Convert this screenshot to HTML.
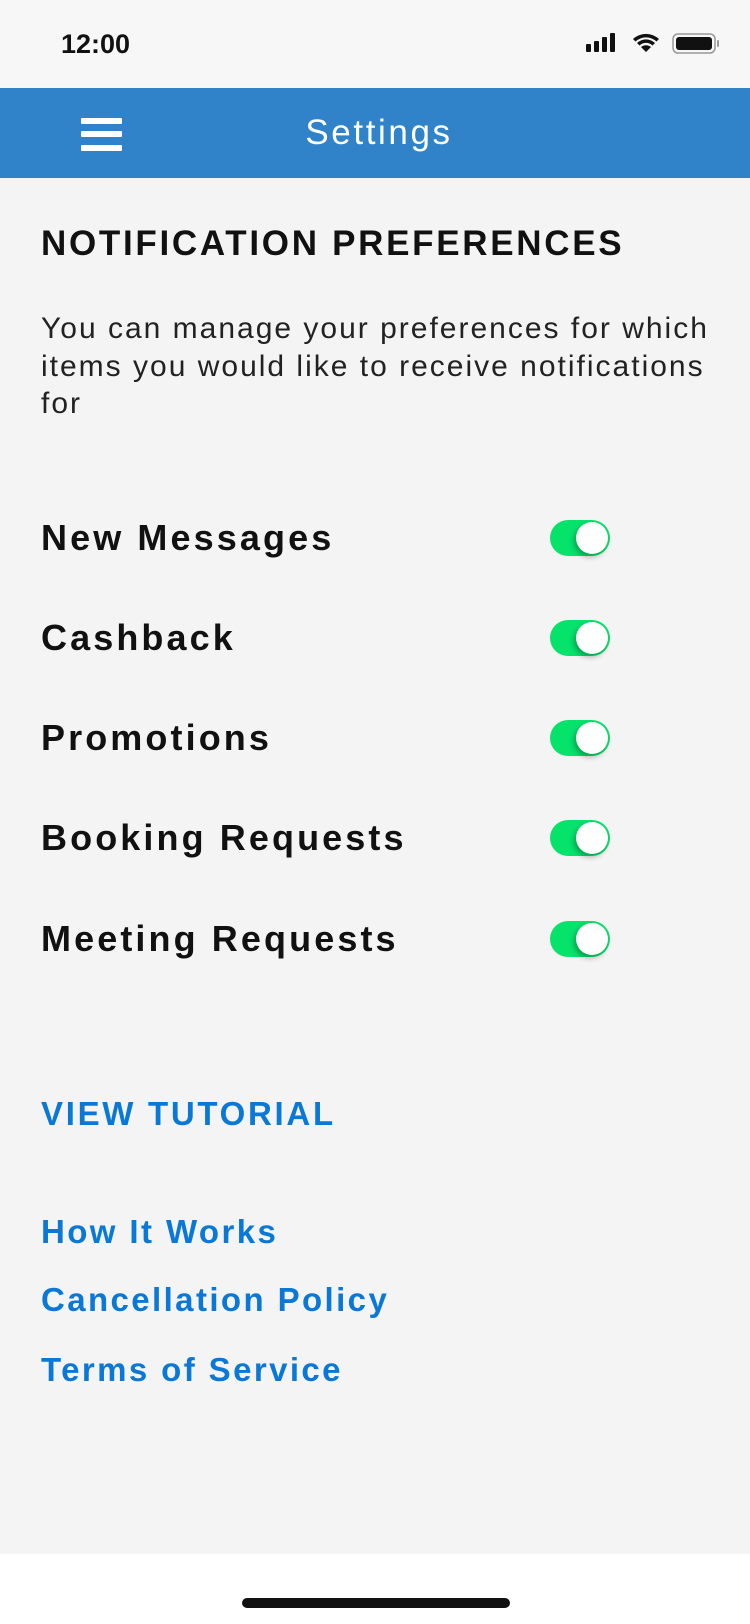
<!DOCTYPE html>
<html><head><meta charset="utf-8"><style>
*{margin:0;padding:0;box-sizing:border-box}
body{width:750px;height:1624px;position:relative;background:#f4f4f4;font-family:"Liberation Sans",sans-serif;overflow:hidden;color:#111}
.a{position:absolute;white-space:nowrap}
.c{line-height:40px;height:40px}
.row{font-weight:bold;font-size:36px;left:41px;letter-spacing:3.1px}
.lnk{font-weight:bold;color:#0a78d7;font-size:33px;left:41px;letter-spacing:2.4px}
.tg{position:absolute;left:550px;width:60px;height:36px;border-radius:18px;background:#06e36b}
.tg::after{content:"";position:absolute;right:2px;top:2px;width:32px;height:32px;border-radius:50%;background:#fff;box-shadow:-2px 3px 6px rgba(0,0,0,.3)}
</style></head><body>
<div class="a" style="left:0;top:0;width:750px;height:88px;background:#f7f7f7"></div>
<div class="a c" style="left:61px;top:24px;font-weight:bold;font-size:27px">12:00</div>
<svg class="a" style="left:585px;top:32px" width="140" height="24" viewBox="0 0 140 24">
<rect x="1" y="12" width="5" height="8" rx="1" fill="#111"/><rect x="9" y="9" width="5" height="11" rx="1" fill="#111"/><rect x="17" y="5" width="5" height="15" rx="1" fill="#111"/><rect x="25" y="1" width="5" height="19" rx="1" fill="#111"/>
<path d="M61 20 L56 15 A8 8 0 0 1 66 15 Z M52 11 A13 13 0 0 1 70 11 L67.5 13.5 A9.5 9.5 0 0 0 54.5 13.5 Z M48 7 A19 19 0 0 1 74 7 L71.5 9.5 A15.5 15.5 0 0 0 50.5 9.5 Z" fill="#111"/>
<rect x="88" y="2" width="42" height="19" rx="5" fill="none" stroke="#999" stroke-width="1.5"/><rect x="91" y="5" width="36" height="13" rx="3" fill="#111"/><rect x="132" y="8" width="2" height="7" rx="1" fill="#999"/>
</svg>
<div class="a" style="left:0;top:88px;width:750px;height:90px;background:#3183c9"></div>
<div class="a" style="left:81px;top:118px;width:41px;height:6px;background:#fff;border-radius:1px"></div>
<div class="a" style="left:81px;top:131px;width:41px;height:6px;background:#fff;border-radius:1px"></div>
<div class="a" style="left:81px;top:145px;width:41px;height:6px;background:#fff;border-radius:1px"></div>
<div class="a c" style="left:0;width:758px;text-align:center;top:113px;color:#fff;font-size:35px;letter-spacing:2.6px">Settings</div>
<div class="a c" style="left:41px;top:224px;font-weight:bold;font-size:35px;letter-spacing:2.7px">NOTIFICATION PREFERENCES</div>
<div class="a" style="left:41px;top:310px;font-size:30px;line-height:37.5px;letter-spacing:2.0px;color:#222">You can manage your preferences for which<br>items you would like to receive notifications<br>for</div>
<div class="a c row" style="top:518px">New Messages</div><div class="tg" style="top:520px"></div>
<div class="a c row" style="top:618px">Cashback</div><div class="tg" style="top:620px"></div>
<div class="a c row" style="top:718px">Promotions</div><div class="tg" style="top:720px"></div>
<div class="a c row" style="top:818px">Booking Requests</div><div class="tg" style="top:820px"></div>
<div class="a c row" style="top:919px">Meeting Requests</div><div class="tg" style="top:921px"></div>
<div class="a c lnk" style="top:1094px;letter-spacing:2.7px">VIEW TUTORIAL</div>
<div class="a c lnk" style="top:1212px">How It Works</div>
<div class="a c lnk" style="top:1280px">Cancellation Policy</div>
<div class="a c lnk" style="top:1350px">Terms of Service</div>
<div class="a" style="left:0;top:1554px;width:750px;height:70px;background:#fff"></div>
<div class="a" style="left:242px;top:1598px;width:268px;height:10px;border-radius:5px;background:#111"></div>
</body></html>
